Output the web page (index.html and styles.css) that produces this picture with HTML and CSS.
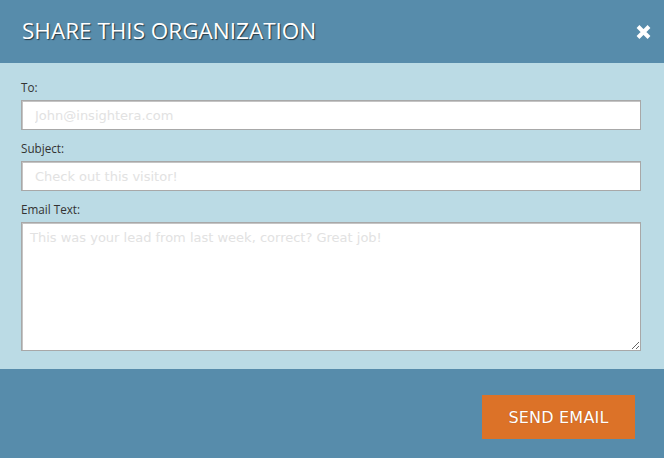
FILE: index.html
```html
<!DOCTYPE html>
<html lang="en">
<head>
<meta charset="utf-8">
<title>Share this organization</title>
<link rel="stylesheet" href="styles.css">
</head>
<body>
<div class="modal">
  <header class="modal-header">
    <h1 class="modal-title">SHARE THIS ORGANIZATION</h1>
    <button class="close" type="button" aria-label="Close">
      <svg width="17" height="16" viewBox="0 0 17 16"><path d="M3 2.5 L14 13.5 M14 2.5 L3 13.5" stroke="#fff" stroke-width="4" stroke-linecap="butt"/></svg>
    </button>
  </header>
  <form class="modal-body">
    <div class="field">
      <label class="label" for="to">To:</label>
      <input class="input" id="to" type="text" placeholder="John@insightera.com">
    </div>
    <div class="field">
      <label class="label" for="subject">Subject:</label>
      <input class="input" id="subject" type="text" placeholder="Check out this visitor!">
    </div>
    <div class="field">
      <label class="label" for="text">Email Text:</label>
      <textarea class="textarea" id="text" placeholder="This was your lead from last week, correct? Great job!"></textarea>
    </div>
  </form>
  <footer class="modal-footer">
    <button class="send" type="button">SEND EMAIL</button>
  </footer>
</div>
</body>
</html>
```
FILE: styles.css
```css
html, body {
  margin: 0;
  padding: 0;
}
body {
  width: 664px;
  height: 458px;
  overflow: hidden;
  background: #578cab;
}
.modal {
  display: flex;
  flex-direction: column;
  height: 458px;
}
.modal-header {
  height: 63px;
  background: #578cab;
  display: flex;
  align-items: center;
  justify-content: space-between;
  padding: 0 12px 0 22px;
  box-sizing: border-box;
}
.modal-title {
  margin: 0;
  font-family: "Open Sans", sans-serif;
  font-weight: 400;
  font-size: 22.5px;
  color: #fff;
  text-shadow: 1px 1px 1px rgba(0, 0, 0, 0.6);
  position: relative;
  top: -1px;
}
.close {
  background: none;
  border: 0;
  padding: 0;
  width: 17px;
  height: 16px;
  display: block;
  cursor: pointer;
}
.close svg { display: block; }
.modal-body {
  background: #bbdbe5;
  padding: 17px 23px 18px 21px;
  margin: 0;
  display: flex;
  flex-direction: column;
  gap: 11px;
}
.field {
  display: flex;
  flex-direction: column;
}
.label {
  font-family: "Open Sans", sans-serif;
  font-size: 11.7px;
  color: #333;
  height: 20px;
  line-height: 14px;
}
.input, .textarea {
  box-sizing: border-box;
  width: 620px;
  background: #fff;
  border: 1px solid #a8a8a8;
  box-shadow: inset 1px 1px 0 #c4c4c4;
  font-family: "DejaVu Sans", Verdana, sans-serif;
  font-size: 13px;
  color: #333;
  margin: 0;
  outline: none;
}
.input {
  height: 30px;
  padding: 0 13px;
}
.textarea {
  height: 129px;
  padding: 7px 8px;
  resize: both;
  display: block;
}
.input::placeholder, .textarea::placeholder {
  color: #e2e2e2;
  opacity: 1;
}
.modal-footer {
  flex: 1;
  background: #578cab;
  display: flex;
  justify-content: flex-end;
  align-items: flex-start;
  padding: 26px 29px 0 0;
}
.send {
  width: 153px;
  height: 44px;
  background: #dc7228;
  border: 0;
  color: #fff;
  font-family: "DejaVu Sans", Verdana, sans-serif;
  font-size: 16px;
  letter-spacing: 0.2px;
  text-shadow: 0 0 1px rgba(120, 40, 0, 0.5);
  padding: 0;
  cursor: pointer;
}
```
